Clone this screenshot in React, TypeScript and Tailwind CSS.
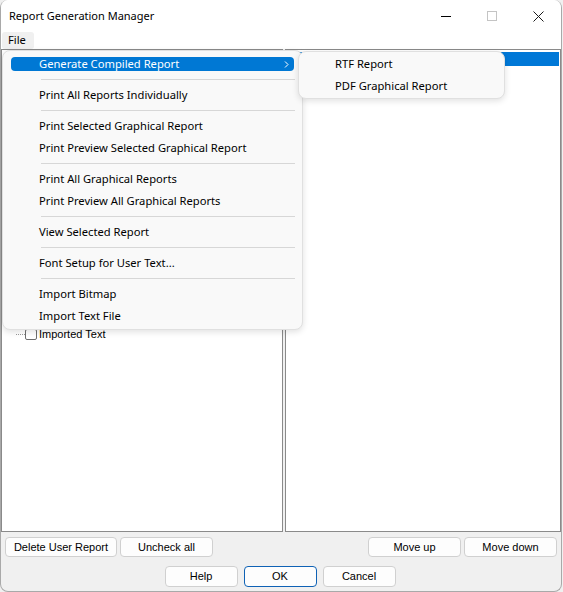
import React from 'react';

type Entry = { label: string; active?: boolean; arrow?: boolean } | 'sep';

const fileMenu: Entry[] = [
  { label: 'Generate Compiled Report', active: true, arrow: true },
  'sep',
  { label: 'Print All Reports Individually' },
  'sep',
  { label: 'Print Selected Graphical Report' },
  { label: 'Print Preview Selected Graphical Report' },
  'sep',
  { label: 'Print All Graphical Reports' },
  { label: 'Print Preview All Graphical Reports' },
  'sep',
  { label: 'View Selected Report' },
  'sep',
  { label: 'Font Setup for User Text...' },
  'sep',
  { label: 'Import Bitmap' },
  { label: 'Import Text File' },
];

function MenuItem({ label, active, arrow }: { label: string; active?: boolean; arrow?: boolean }) {
  return (
    <div className="relative h-[22px] flex items-center">
      {active && <div className="absolute left-[8px] right-[8px] top-[4px] bottom-[4px] rounded-[4px] bg-[#0078d4]" />}
      <span className={active ? 'relative pl-[36px] text-white' : 'relative pl-[36px] text-black'}>{label}</span>
      {arrow && (
        <svg className="absolute right-[13px] top-[8px]" width="5" height="7" viewBox="0 0 5 7">
          <polyline points="1,0.5 4,3.5 1,6.5" fill="none" stroke="#ffffff" strokeWidth="1" />
        </svg>
      )}
    </div>
  );
}

function Btn({ label, className, primary }: { label: string; className: string; primary?: boolean }) {
  return (
    <div
      className={`${className} flex items-center justify-center rounded-[4px] bg-[#fdfdfd] text-[11px] text-black font-['Liberation_Sans',Arial,sans-serif] border ${
        primary ? 'border-[#0f62b5]' : 'border-[#d0d0d0]'
      }`}
    >
      {label}
    </div>
  );
}

export default function App() {
  return (
    <div className="relative w-[563px] h-[592px] overflow-hidden bg-[#f0f0f0] font-['Noto_Sans',sans-serif] text-[11px]">
      <div className="relative w-[562px] h-[592px] flex flex-col rounded-t-[8px] rounded-b-[8px] border-x border-b border-[#a9a9a9] bg-[#f0f0f0] overflow-hidden">
        {/* Title bar */}
        <div className="h-[32px] bg-white flex items-center">
          <span className="pl-[8px] text-[11px] text-black">Report Generation Manager</span>
          <div className="ml-auto flex h-full">
            <div className="w-[46px] h-full flex items-center justify-center">
              <div className="w-[10px] h-[1px] bg-black" />
            </div>
            <div className="w-[46px] h-full flex items-center justify-center">
              <div className="w-[10px] h-[10px] border border-[#c4c4c4]" />
            </div>
            <div className="w-[46px] h-full flex items-center justify-center">
              <svg width="11" height="11" viewBox="0 0 11 11">
                <path d="M0.5 0.5 L10.5 10.5 M10.5 0.5 L0.5 10.5" stroke="#1a1a1a" strokeWidth="1" />
              </svg>
            </div>
          </div>
        </div>

        {/* Menu bar */}
        <div className="h-[17px] bg-white flex items-stretch px-[1px]">
          <div className="w-[32px] flex items-center pl-[6px] bg-[#f0f0f0] rounded-[3px] text-[11.2px] text-black">File</div>
        </div>

        {/* Panels */}
        <div className="h-[483px] flex gap-[2px]">
          <div className="w-[283px] h-full bg-white border border-[#8a8a8a] relative">
            <div className="absolute left-[14px] top-[276px] flex items-center">
              <div className="w-[9px] border-t border-dotted border-[#9a9a9a]" />
              <div className="w-[12px] h-[11px] border border-[#6e6e6e] rounded-[2px] bg-white" />
              <span className="pl-[2px] text-[11px] text-black font-['Liberation_Sans',Arial,sans-serif]">Imported Text</span>
            </div>
          </div>
          <div className="w-[276px] h-full bg-white border border-[#8a8a8a] pt-[2px] px-[1px]">
            <div className="h-[14px] bg-[#0078d7]" />
          </div>
        </div>

        {/* Buttons row 1 */}
        <div className="mt-[5px] h-[20px] flex px-[4px]">
          <Btn label="Delete User Report" className="w-[112px]" />
          <Btn label="Uncheck all" className="w-[93px] ml-[3px]" />
          <Btn label="Move up" className="w-[93px] ml-auto" />
          <Btn label="Move down" className="w-[93px] ml-[3px]" />
        </div>

        {/* Buttons row 2 */}
        <div className="mt-[9px] h-[21px] flex justify-center gap-[6px] pr-[2px]">
          <Btn label="Help" className="w-[73px]" />
          <Btn label="OK" className="w-[73px]" primary />
          <Btn label="Cancel" className="w-[73px]" />
        </div>
      </div>

      {/* File menu popup */}
      <div className="absolute left-[2px] top-[50px] w-[301px] rounded-[8px] border border-[#e0e0e0] bg-[#f9f9f9] py-[2px] text-[11.2px] shadow-[0_2px_6px_rgba(0,0,0,0.12)]">
        {fileMenu.map((e, i) =>
          e === 'sep' ? (
            <div key={i} className="h-[9px] flex items-center">
              <div className="ml-[38px] mr-[7px] flex-1 h-[1px] bg-[#d7d7d7]" />
            </div>
          ) : (
            <MenuItem key={i} label={e.label} active={e.active} arrow={e.arrow} />
          )
        )}
      </div>

      {/* Submenu */}
      <div className="absolute left-[298px] top-[51px] w-[207px] rounded-[8px] border border-[#e0e0e0] bg-[#f9f9f9] py-[1px] text-[11.2px] shadow-[0_2px_6px_rgba(0,0,0,0.12)]">
        <MenuItem label="RTF Report" />
        <MenuItem label="PDF Graphical Report" />
      </div>
    </div>
  );
}
